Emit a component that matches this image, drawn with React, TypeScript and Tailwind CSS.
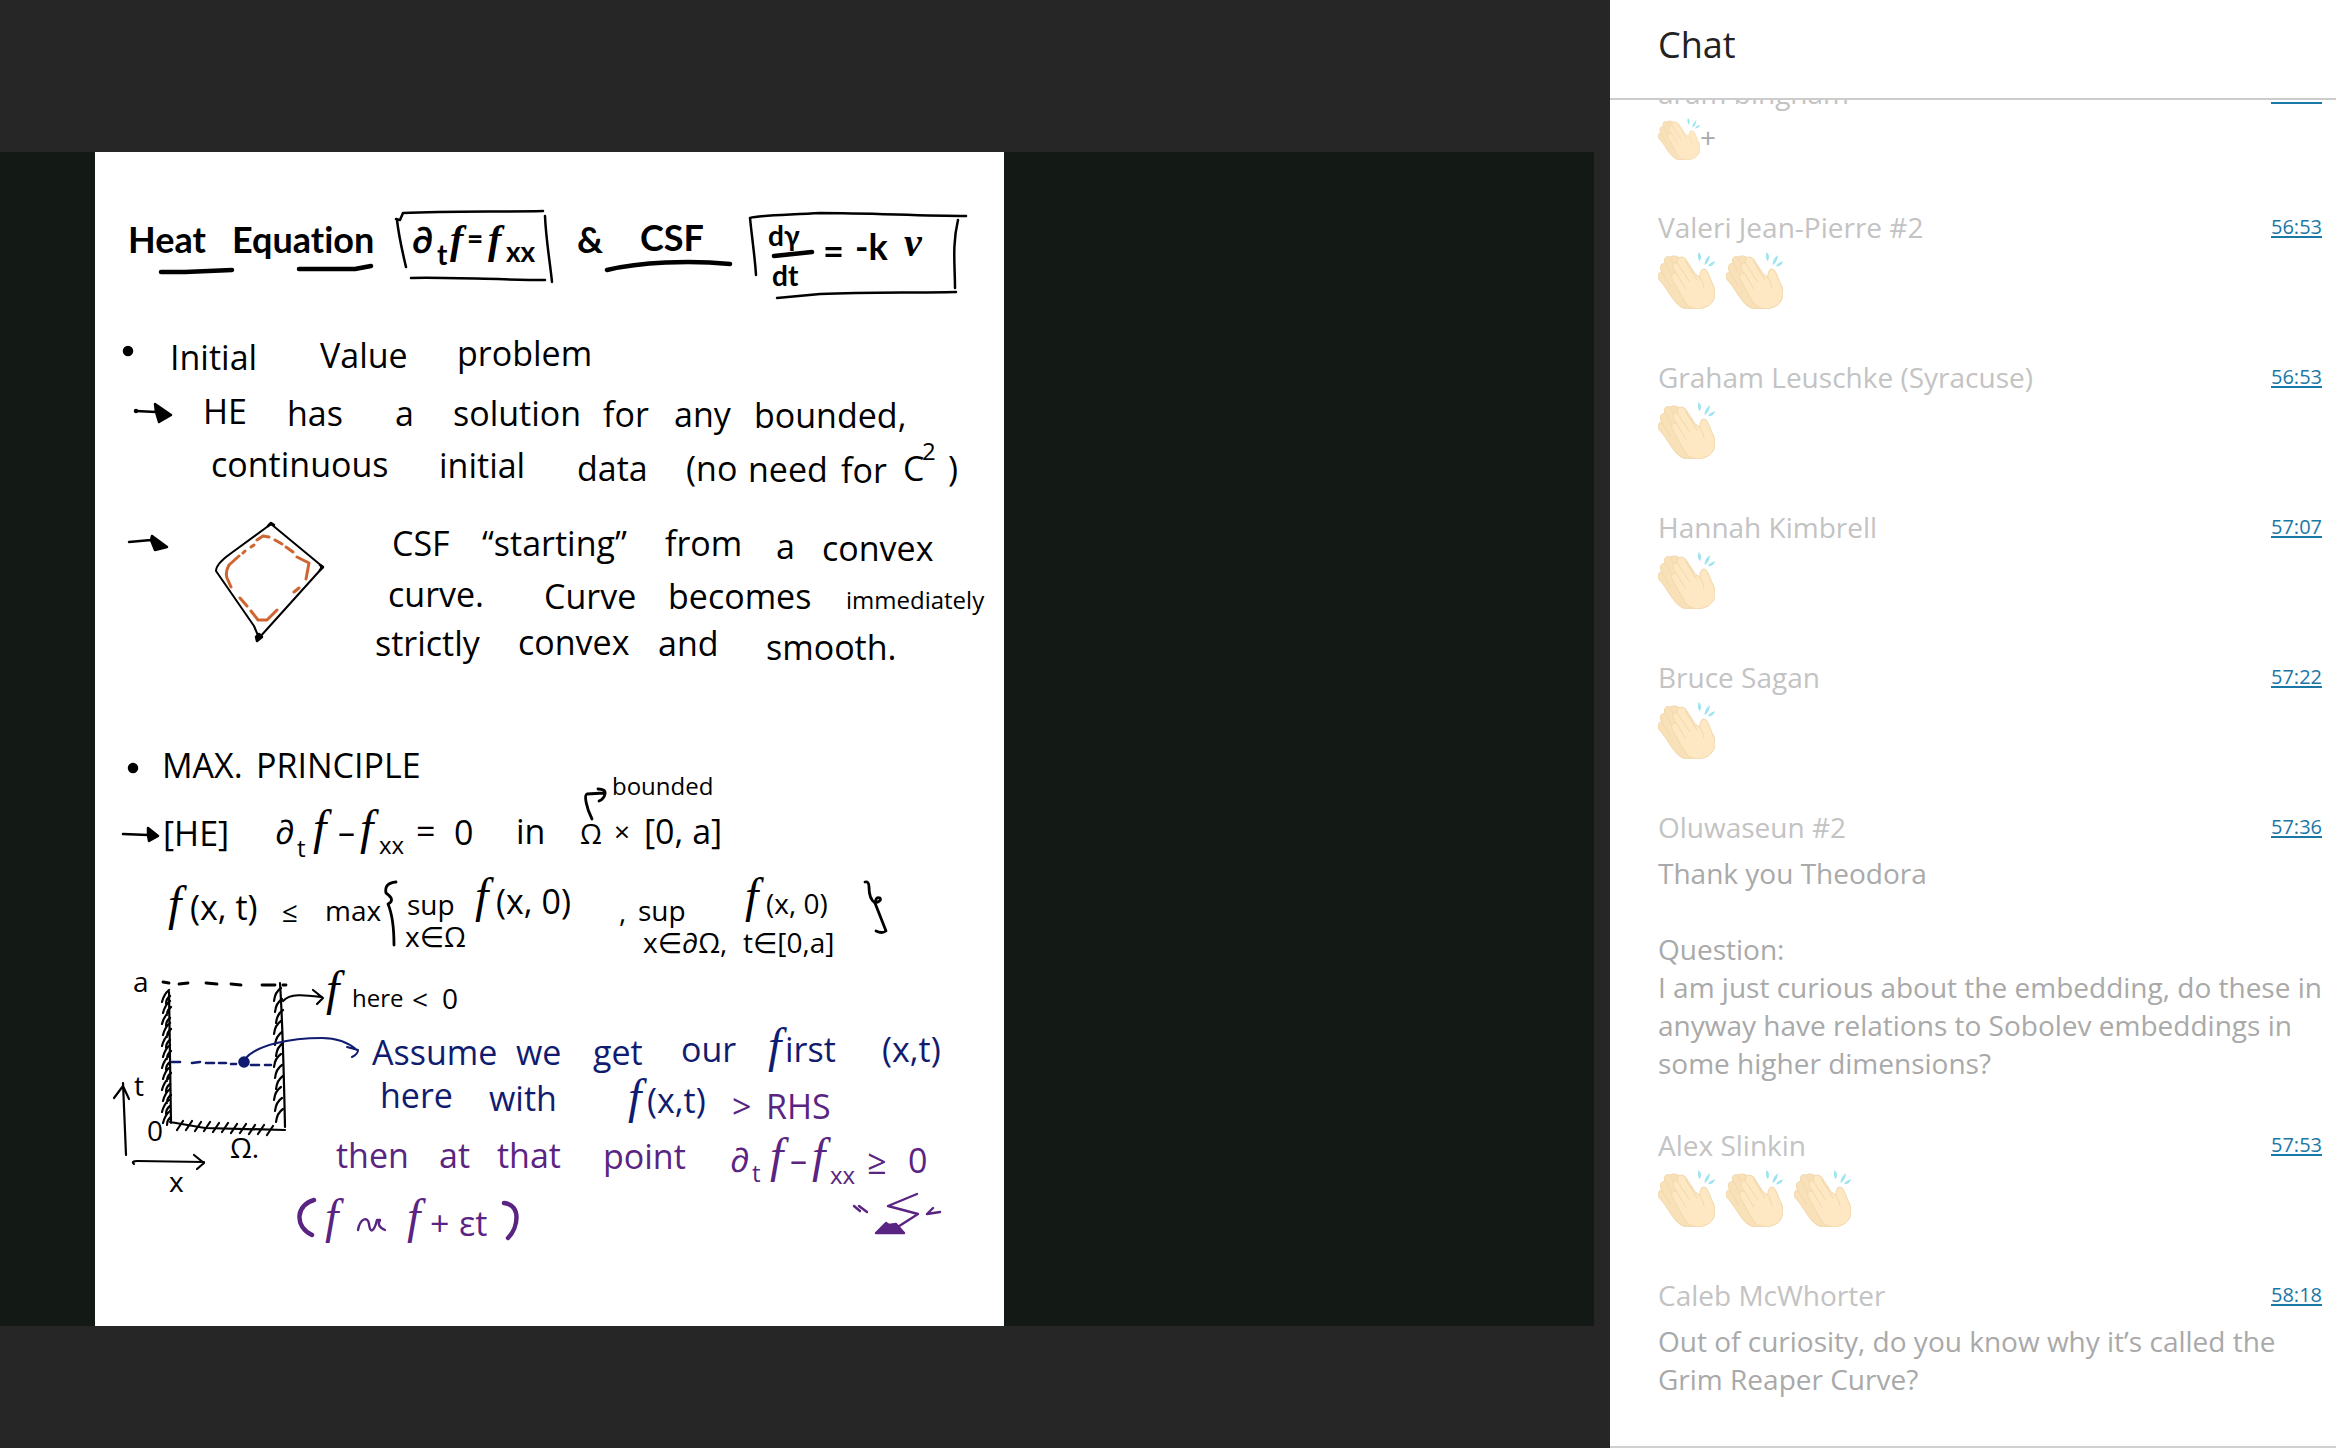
type Word = [x: number, y: number, text: string];

const title: Word[] = [
  [128, 253, "Heat"], [232, 253, "Equation"], [412, 253, "∂"], [577, 253, "&"], [640, 251, "CSF"],
  [823, 264, "="], [855, 260, "-k"],
];
const titleMath: Word[] = [[450, 253, "f"], [488, 253, "f"], [904, 256, "ν"]];
const titleSmall: Word[] = [[437, 265, "t"], [467, 249, "="], [506, 262, "xx"], [768, 246, "dγ"], [772, 286, "dt"]];

const notes: Word[] = [
  [170, 370, "Initial"], [320, 368, "Value"], [457, 366, "problem"],
  [203, 424, "HE"], [287, 426, "has"], [395, 426, "a"], [453, 426, "solution"], [603, 427, "for"],
  [674, 427, "any"], [754, 428, "bounded,"],
  [211, 477, "continuous"], [439, 478, "initial"], [577, 481, "data"], [686, 481, "(no"],
  [748, 482, "need"], [841, 483, "for"], [903, 481, "C"], [948, 481, ")"],
  [392, 556, "CSF"], [482, 556, "“starting”"], [665, 556, "from"], [776, 559, "a"], [822, 561, "convex"],
  [388, 607, "curve."], [544, 609, "Curve"], [668, 609, "becomes"],
  [375, 656, "strictly"], [518, 655, "convex"], [658, 656, "and"], [766, 660, "smooth."],
  [162, 778, "MAX."], [256, 778, "PRINCIPLE"],
  [163, 846, "[HE]"], [275, 844, "∂"], [338, 844, "–"], [416, 844, "="],
  [454, 845, "0"], [516, 844, "in"], [644, 844, "[0, a]"],
  [190, 920, "(x, t)"], [496, 914, "(x, 0)"],
];
const notesMedium: Word[] = [
  [580, 844, "Ω"], [614, 842, "×"],
  [282, 922, "≤"], [325, 921, "max"], [407, 915, "sup"],
  [619, 922, ","], [638, 921, "sup"], [766, 914, "(x, 0)"],
  [133, 992, "a"], [147, 1141, "0"], [134, 1096, "t"], [169, 1192, "x"], [230, 1158, "Ω."],
  [412, 1010, "<"], [442, 1009, "0"],
  [405, 947, "x∈Ω"], [643, 953, "x∈∂Ω,"], [743, 953, "t∈[0,a]"],
];
const notesSmall: Word[] = [
  [922, 460, "2"], [297, 857, "t"], [379, 854, "xx"], [612, 795, "bounded"],
  [846, 609, "immediately"], [352, 1007, "here"],
];
const notesMath: Word[] = [
  [313, 844, "f"], [360, 844, "f"], [168, 920, "f"], [475, 912, "f"], [745, 912, "f"], [326, 1005, "f"],
];

const blue: Word[] = [
  [372, 1065, "Assume"], [516, 1065, "we"], [593, 1065, "get"], [681, 1062, "our"], [785, 1062, "irst"],
  [882, 1062, "(x,t)"], [380, 1108, "here"], [489, 1111, "with"], [647, 1113, "(x,t)"],
];
const blueMath: Word[] = [[768, 1062, "f"], [628, 1113, "f"]];
const purple: Word[] = [
  [732, 1119, ">"], [766, 1119, "RHS"], [336, 1168, "then"], [439, 1168, "at"], [497, 1168, "that"],
  [603, 1169, "point"], [730, 1172, "∂"], [790, 1172, "–"], [867, 1174, "≥"], [908, 1173, "0"],
  [430, 1236, "+"], [459, 1236, "εt"],
];
const purpleMath: Word[] = [[770, 1172, "f"], [812, 1172, "f"], [325, 1233, "f"], [407, 1233, "f"]];
const purpleSmall: Word[] = [[752, 1182, "t"], [830, 1184, "xx"]];

const SIZES = {
  title: "text-[36px] font-bold font-[Lato,'DejaVu_Sans',sans-serif]",
  titleMath: "text-[40px] font-bold italic font-['Liberation_Serif',serif]",
  titleSmall: "text-[28px] font-bold font-[Lato,'DejaVu_Sans',sans-serif]",
  body: "text-[34px] font-['Open_Sans','DejaVu_Sans',sans-serif]",
  medium: "text-[28px] font-['Open_Sans','DejaVu_Sans',sans-serif]",
  small: "text-[24px] font-['Open_Sans','DejaVu_Sans',sans-serif]",
  math: "text-[48px] italic font-['Liberation_Serif',serif]",
};

function Words({ words, size }: { words: Word[]; size: keyof typeof SIZES }) {
  return (
    <g className={SIZES[size]} stroke="none">
      {words.map(([x, y, text]) => (
        <text key={`${x}-${y}`} x={x} y={y}>{text}</text>
      ))}
    </g>
  );
}

// Short slanted ticks along the boundary walls of the parabolic domain.
const leftTicks = Array.from({ length: 12 }, (_, i) => `M${169 + (i % 2)} ${990 + i * 11}q-5 4-7 12m8-6q-4 3-4 8`).join("");
const rightTicks = Array.from({ length: 12 }, (_, i) => `M${281 + (i % 3)} ${988 + i * 11}q-6 4-7 13`).join("");
const floorTicks = Array.from({ length: 11 }, (_, i) => `M${183 + i * 9} ${1121 + (i >> 1)}l-6 9`).join("");

function Whiteboard() {
  return (
    <svg
      viewBox="95 152 909 1174"
      className="block h-full bg-white [font-variant-ligatures:none]"
      role="img"
      aria-label="Lecture notes"
      fill="none"
      strokeLinecap="round"
      strokeLinejoin="round"
    >
      <g className="fill-black stroke-black">
        <Words words={title} size="title" />
        <Words words={titleMath} size="titleMath" />
        <Words words={titleSmall} size="titleSmall" />
        <Words words={notes} size="body" />
        <Words words={notesMedium} size="medium" />
        <Words words={notesSmall} size="small" />
        <Words words={notesMath} size="math" />
      </g>

      <g stroke="#000" strokeWidth="4.5">
        <path d="M161 272L185 272L232 270M299 269L355 269L371 266M607 270C640 262 690 260 730 264M774 256L812 252" />
      </g>
      <g stroke="#000" strokeWidth="2.5">
        <path d="M396 219L400 220L403 213C450 211 500 212 543 211M397 220C399 238 403 254 406 267M545 216C546 240 550 262 552 282M411 278C450 277 500 280 545 280" />
        <path d="M750 218C760 215 790 215 820 213C870 213 920 216 966 216M750 218C752 238 755 258 756 275M958 220C952 245 955 266 955 288M777 298L820 294C870 292 910 293 956 292" />
      </g>
      <g fill="#000" stroke="#000" strokeWidth="2.5">
        <circle cx="128" cy="351" r="4" />
        <circle cx="133" cy="768" r="4" />
        <circle cx="136" cy="411" r="1" />
        <path d="M136 411L156 412L155 404L171 415L159 422L156 412" />
        <path d="M129 542L151 540L152 536L167 547L155 550L151 540" />
        <path d="M123 834L148 835L148 828L158 836L149 841L148 835" />
        <path d="M268 526L271 523L274 525M320 565L323 567L320 570M256 637L259 634L262 637L257 641Z" />
      </g>
      <g stroke="#000" strokeWidth="2">
        <path d="M271 524L230 554Q216 564 216 571L254 626L259 638L323 567Z" />
      </g>
      <path
        stroke="#cf6530"
        strokeWidth="3"
        d="M269 537L263 536L257 540M254 545L251 547M245 551L243 553M239 556L229 565Q225 572 227 578L231 587M275 540L282 544M286 547L293 552M297 557L309 563L306 579M299 588L294 592M240 598L247 606M251 611L258 620H267L277 610"
      />

      <g stroke="#000" strokeWidth="2.8">
        <path d="M592 819C586 807 584 795 587 794L604 793M598 789Q606 789 605 794Q604 799 599 801" />
        <path d="M396 882Q384 883 386 893Q396 900 388 904Q394 918 394 945" />
        <path d="M865 882Q869 881 869 887Q869 899 875 903Q882 901 880 898Q876 896 875 903L886 931Q882 934 876 931" />
        <path d="M163 982L169 983M179 984L188 983M206 983L217 984M231 984L241 985M262 985L275 985M283 985L286 985" />
      </g>
      <g stroke="#000" strokeWidth="2.2">
        <path d="M169 992L171 1123M280 983C283 1030 284 1080 285 1127M170 1122L205 1128L285 1130" />
        <path d={leftTicks} />
        <path d={rightTicks} />
        <path d={floorTicks} />
        <path d="M283 1001C290 993 305 995 322 997M313 990L323 998L317 1004" />
        <path d="M126 1155L123 1083M114 1098L123 1086L129 1099" />
        <path d="M134 1164Q131 1161 137 1161L204 1162M194 1155L204 1163L197 1169" />
      </g>

      <g stroke="#101c70" strokeWidth="2.6">
        <path d="M172 1062L180 1062M192 1063L200 1062M206 1063L214 1063M219 1063L226 1063M231 1064L236 1064M251 1065L259 1065M265 1065L271 1065" />
        <path strokeWidth="2" d="M245 1059C256 1045 290 1038 322 1038C338 1038 350 1044 357 1050M347 1047L358 1050Q358 1054 352 1057" />
        <circle cx="244" cy="1062" r="4.5" fill="#101c70" />
      </g>
      <g className="fill-[#101c70]">
        <Words words={blue} size="body" />
        <Words words={blueMath} size="math" />
      </g>

      <g className="fill-[#5a2482]">
        <Words words={purple} size="body" />
        <Words words={purpleMath} size="math" />
        <Words words={purpleSmall} size="small" />
      </g>
      <g stroke="#5a2482" strokeWidth="2.4">
        <path strokeWidth="4.5" d="M314 1200C296 1205 294 1226 312 1235M504 1203C522 1205 518 1228 508 1238" />
        <path d="M358 1230C360 1218 368 1216 369 1224C370 1234 374 1232 377 1220L380 1220Q376 1226 385 1230" />
        <path d="M854 1206L860 1211M859 1206L867 1212M917 1194L888 1206L918 1214L893 1230M927 1214L933 1208M927 1214L940 1212" />
        <path fill="#5a2482" d="M876 1233L886 1223L889 1225L896 1224L904 1233Z" />
      </g>
    </svg>
  );
}

function Clap({ small = false }: { small?: boolean }) {
  return (
    <svg viewBox="0 0 56 56" className={small ? "size-[42px]" : "size-[57px]"} role="img" aria-label="clapping hands">
      <g stroke="#f2d9ae" strokeLinecap="round">
        <path
          fill="#f8e0b9"
          d="M8 12C4 8 8 3 12 5C15 3 19 4 21 6L40 30L42 54C34 57 25 57 20 52C13 46 8 34 1 27C-1 22 2 19 4 20C0 14 4 10 8 12Z"
        />
        <path fill="none" d="M4 20L12 34M8 12L14 24M12 6L16 13" />
        <path
          fill="#fee8c3"
          d="M19 11C18 5 23 3 27 7L36 21L41 25C41 20 43 16 46 17C49 18 50 23 53 30C58 39 57 48 49 53C40 58 31 56 27 50L14 27C12 22 16 19 19 22L16 18C13 13 16 9 19 11Z"
        />
        <path fill="none" d="M19 11L31 29M27 9L38 27M19 22L27 36M41 25C44 29 45 32 45 35" />
      </g>
      <g fill="#9ce4f0">
        <path d="M40 0Q44 4 41 9Q38 5 40 0Z" />
        <path d="M51 3Q51 9 46 13Q45 8 51 3Z" />
        <path d="M56 9Q55 14 49 14Q51 10 56 9Z" />
      </g>
    </svg>
  );
}

type Message = { name: string; time: string; claps?: number; text?: string };

const messages: Message[] = [
  { name: "aram bingham", time: "56:50", claps: 1, text: "+" },
  { name: "Valeri Jean-Pierre #2", time: "56:53", claps: 2 },
  { name: "Graham Leuschke (Syracuse)", time: "56:53", claps: 1 },
  { name: "Hannah Kimbrell", time: "57:07", claps: 1 },
  { name: "Bruce Sagan", time: "57:22", claps: 1 },
  {
    name: "Oluwaseun #2",
    time: "57:36",
    text: "Thank you Theodora\n\nQuestion:\nI am just curious about the embedding, do these in anyway have relations to Sobolev embeddings in some higher dimensions?",
  },
  { name: "Alex Slinkin", time: "57:53", claps: 3 },
  { name: "Caleb McWhorter", time: "58:18", text: "Out of curiosity, do you know why it’s called the Grim Reaper Curve?" },
];

function MessageBody({ claps = 0, text }: Message) {
  if (claps && text) {
    return (
      <div className="mt-1.5 flex h-[46px] items-start text-[#a9a9a9]">
        <Clap small />
        <span>{text}</span>
      </div>
    );
  }
  if (claps) {
    return (
      <div className="mt-1.5 flex h-[62px] gap-[11px]">
        {Array.from({ length: claps }, (_, i) => <Clap key={i} />)}
      </div>
    );
  }
  return <p className="mt-2 whitespace-pre-line text-[#a9a9a9]">{text}</p>;
}

export default function App() {
  return (
    <div className="flex h-screen overflow-hidden bg-[#262626] font-['Open_Sans',sans-serif]">
      <main className="min-w-0 flex-1 pt-[152px] pr-4 pb-[122px]">
        <div className="h-full bg-[#131914] pl-[95px]">
          <Whiteboard />
        </div>
      </main>
      <aside className="flex w-[726px] shrink-0 flex-col border-b-2 border-[#d0d0d0] bg-white">
        <header className="flex h-[100px] shrink-0 items-center border-b-2 border-[#cccccc] pb-2 pl-12">
          <h1 className="text-4xl text-[#222222]">Chat</h1>
        </header>
        <ol className="flex min-h-0 flex-1 flex-col justify-end gap-11 overflow-hidden pr-3.5 pb-12 pl-12 text-[28px] leading-[38px]">
          {messages.map((message) => (
            <li key={message.name}>
              <div className="flex items-start justify-between">
                <span className="text-[#c3c3c3]">{message.name}</span>
                <a href={`#t=${message.time}`} className="text-xl leading-[38px] text-[#1b77a5] underline decoration-2 underline-offset-2">
                  {message.time}
                </a>
              </div>
              <MessageBody {...message} />
            </li>
          ))}
        </ol>
      </aside>
    </div>
  );
}
